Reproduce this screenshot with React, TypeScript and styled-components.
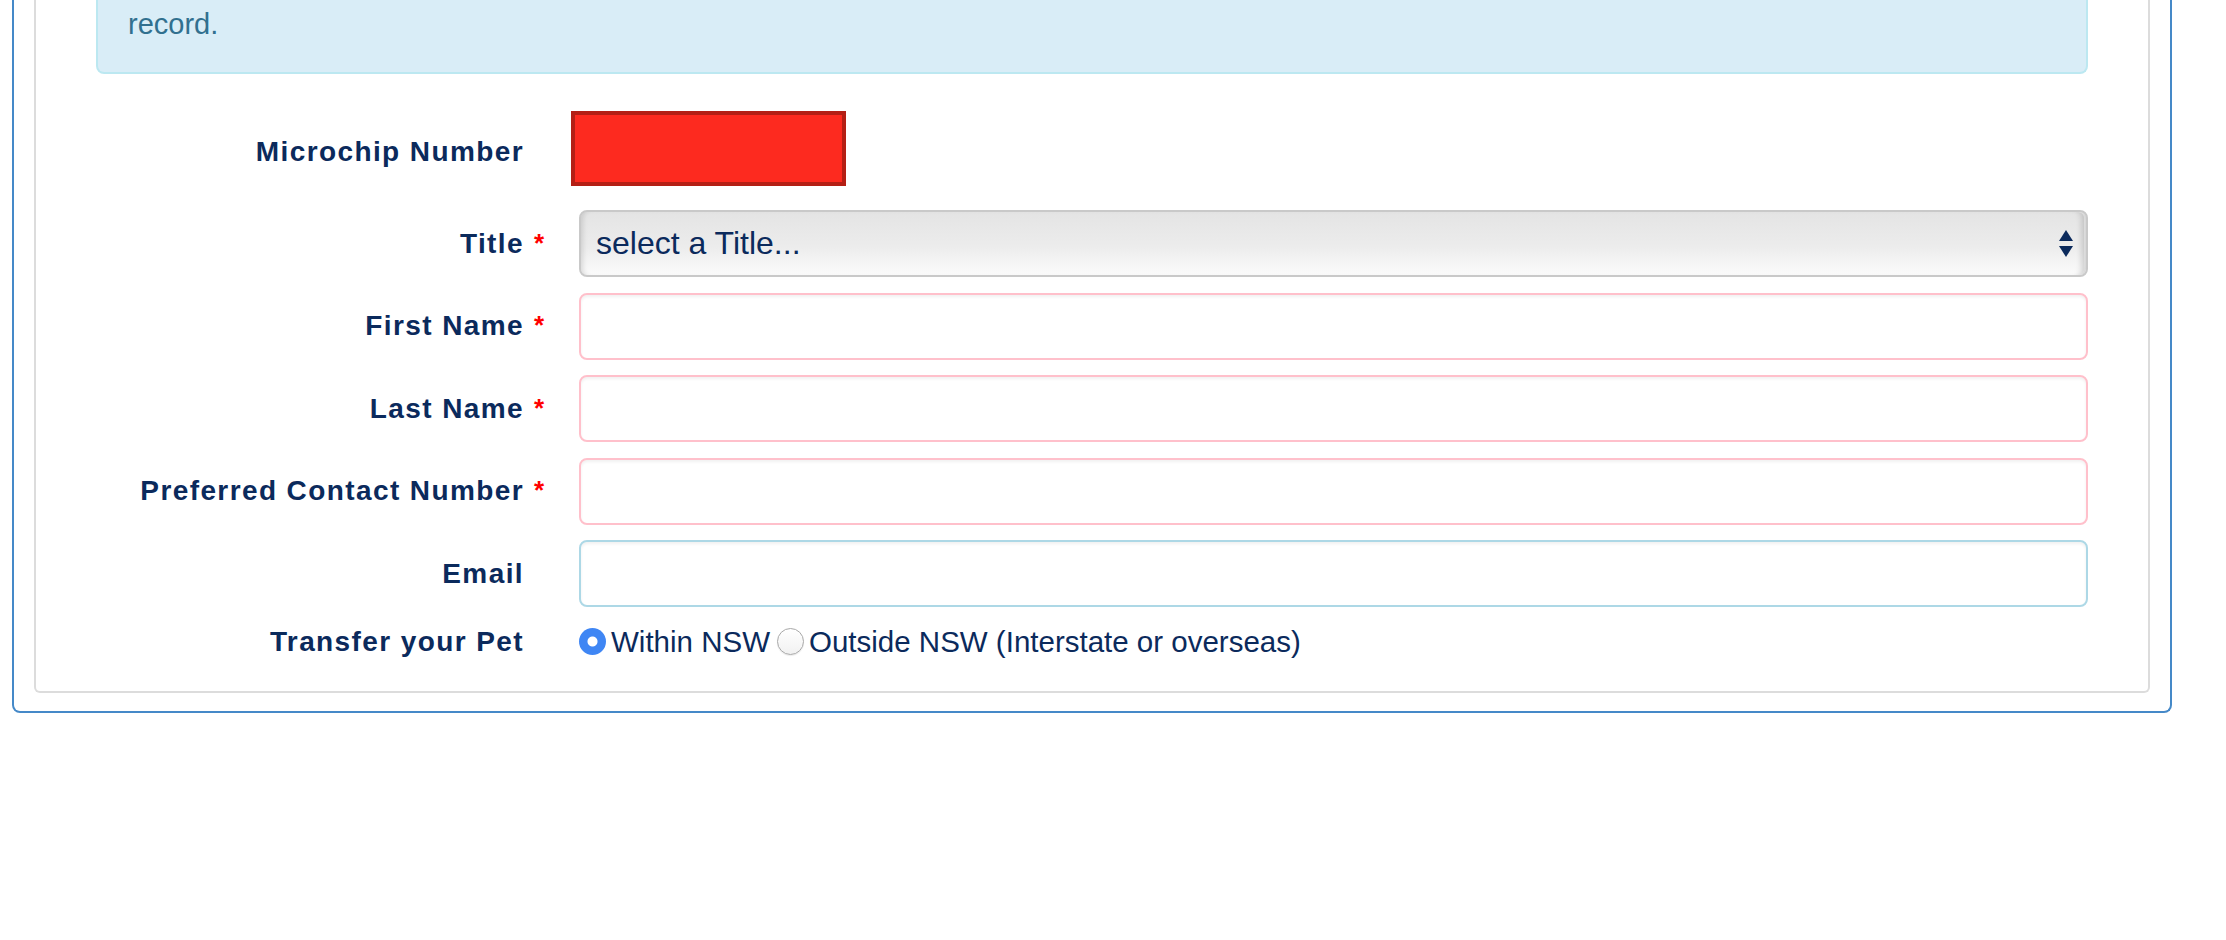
import React from "react";
import styled, { createGlobalStyle } from "styled-components";

const GlobalStyle = createGlobalStyle`
  html, body {
    margin: 0;
    padding: 0;
    background: #ffffff;
  }
  body {
    font-family: "Liberation Sans", Arial, Helvetica, sans-serif;
  }
  * {
    box-sizing: border-box;
  }
`;

// outer blue frame, its top is scrolled off the page
const Outer = styled.div`
  margin-left: 12px;
  width: 2160px;
  border: 2px solid #4589c8;
  border-top: none;
  border-radius: 0 0 8px 8px;
  padding: 0 20px 18px;
`;

const Panel = styled.div`
  border: 2px solid #dcdcdc;
  border-top: none;
  border-radius: 0 0 6px 6px;
  padding: 0 60px 30px;
`;

const Alert = styled.div`
  background: #d9edf7;
  border: 2px solid #bce8f1;
  border-top: none;
  border-radius: 0 0 8px 8px;
  padding: 3px 30px 27px;
  color: #31708f;
  font-size: 29px;
  line-height: 42px;
`;

const Form = styled.form`
  margin-top: 37px;
  display: flex;
  flex-direction: column;
  gap: 15.5px;
`;

const Row = styled.div<{ $extra?: number }>`
  display: grid;
  grid-template-columns: 455px 1fr;
  column-gap: 28px;
  align-items: center;
  margin-bottom: ${(p) => p.$extra ?? 0}px;
`;

const Label = styled.label<{ $drop?: number }>`
  display: flex;
  justify-content: flex-end;
  align-items: center;
  padding-top: ${(p) => p.$drop ?? 0}px;
  color: #0b2a5c;
  font-weight: bold;
  font-size: 28px;
  letter-spacing: 1.4px;
  white-space: nowrap;
`;

const Star = styled.span`
  width: 27px;
  padding-left: 10px;
  color: #ff0000;
  font-size: 26px;
  letter-spacing: 0;
  align-self: flex-start;
`;

const Redacted = styled.div`
  width: 275px;
  height: 75px;
  margin-left: -8px;
  background: #fd2a1f;
  border: 4px solid #b41f15;
`;

const SelectBox = styled.div`
  position: relative;
  height: 67px;
  border: 2px solid #c9c9c9;
  border-radius: 8px;
  background: linear-gradient(#e4e4e4 0%, #ececec 55%, #fbfbfb 100%);
  box-shadow: inset 5px 0 5px -3px rgba(0, 0, 0, 0.12),
    inset -10px 0 6px -6px rgba(0, 0, 0, 0.18), inset -2px 0 0 #ffffff;
  display: flex;
  align-items: center;
  padding: 0 15px;
  color: #0b2a5c;
  font-size: 32px;
`;

const Arrows = styled.svg`
  position: absolute;
  right: 13px;
  top: 50%;
  transform: translateY(-50%);
`;

const TextInput = styled.input<{ $tone: "required" | "plain" }>`
  height: 67px;
  width: 100%;
  border: 2px solid ${(p) => (p.$tone === "required" ? "#ffc0cb" : "#add8e6")};
  border-radius: 8px;
  background: #ffffff;
  box-shadow: inset 0 2px 3px rgba(0, 0, 0, 0.06);
  outline: none;
  font-size: 29px;
  padding: 0 15px;
`;

const RadioGroup = styled.div`
  display: flex;
  align-items: center;
  height: 38px;
  color: #0b2a5c;
  font-size: 29.5px;
`;

const RadioLabel = styled.label`
  display: flex;
  align-items: center;
  gap: 5px;
  margin-right: 7px;
  white-space: nowrap;
`;

const Radio = styled.input`
  appearance: none;
  margin: 0;
  width: 27px;
  height: 27px;
  border-radius: 50%;
  border: 1px solid #a8a8a8;
  background: linear-gradient(#ffffff, #f1f1f1);
  box-shadow: 0 1px 1px rgba(0, 0, 0, 0.08);

  &:checked {
    border: none;
    background: radial-gradient(circle, #ffffff 0 4.5px, #3f86f4 5.5px);
    box-shadow: none;
  }
`;

type Field = { label: string; required: boolean };

const fields: Field[] = [
  { label: "First Name", required: true },
  { label: "Last Name", required: true },
  { label: "Preferred Contact Number", required: true },
  { label: "Email", required: false },
];

const App: React.FC = () => {
  return (
    <>
      <GlobalStyle />
      <Outer>
        <Panel>
          <Alert>record.</Alert>
          <Form onSubmit={(e) => e.preventDefault()}>
            <Row $extra={8.5}>
              <Label $drop={6}>
                Microchip Number
                <Star />
              </Label>
              <Redacted />
            </Row>
            <Row>
              <Label>
                Title
                <Star>*</Star>
              </Label>
              <SelectBox>
                select a Title...
                <Arrows width="14" height="28" viewBox="0 0 14 28">
                  <polygon points="7,0 14,11 0,11" fill="#0b2a5c" />
                  <polygon points="0,16 14,16 7,27" fill="#0b2a5c" />
                </Arrows>
              </SelectBox>
            </Row>
            {fields.map((f) => (
              <Row key={f.label}>
                <Label>
                  {f.label}
                  <Star>{f.required ? "*" : ""}</Star>
                </Label>
                <TextInput type="text" $tone={f.required ? "required" : "plain"} />
              </Row>
            ))}
            <Row>
              <Label>
                Transfer your Pet
                <Star />
              </Label>
              <RadioGroup>
                <RadioLabel>
                  <Radio type="radio" name="transfer" defaultChecked />
                  Within NSW
                </RadioLabel>
                <RadioLabel>
                  <Radio type="radio" name="transfer" />
                  Outside NSW (Interstate or overseas)
                </RadioLabel>
              </RadioGroup>
            </Row>
          </Form>
        </Panel>
      </Outer>
    </>
  );
};

export default App;
